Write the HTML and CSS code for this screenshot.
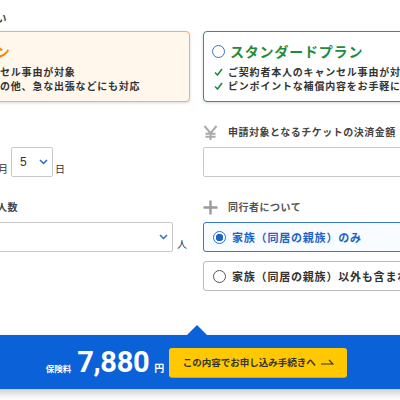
FILE: index.html
```html
<!DOCTYPE html>
<html lang="ja">
<head>
<meta charset="utf-8">
<title>プラン選択</title>
<link rel="stylesheet" href="styles.css">
</head>
<body>
<div class="viewport">
  <div class="page">
    <section class="plans">
      <div class="label">
        <svg class="icon" viewBox="0 0 15 15"><path d="M2 3h11M2 7.5h11M2 12h11" stroke="#999" stroke-width="2" fill="none"/></svg>
        <span>プランを選んでください</span>
      </div>
      <div class="cards">
        <div class="card card--light">
          <div class="card-title"><span class="radio radio--orange"></span>プレミアムプラン</div>
          <ul class="checks checks--orange">
            <li><svg class="check" viewBox="0 0 9 8"><path d="M1 4.5L3.5 7L8 1" fill="none" stroke-width="1.6"/></svg>ご契約者本人のキャンセル事由が対象</li>
            <li><svg class="check" viewBox="0 0 9 8"><path d="M1 4.5L3.5 7L8 1" fill="none" stroke-width="1.6"/></svg>ご家族の病気・ケガその他、急な出張などにも対応</li>
          </ul>
        </div>
        <div class="card card--std">
          <div class="card-title"><span class="radio radio--blue"></span>スタンダードプラン</div>
          <ul class="checks checks--green">
            <li><svg class="check" viewBox="0 0 9 8"><path d="M1 4.5L3.5 7L8 1" fill="none" stroke-width="1.6"/></svg>ご契約者本人のキャンセル事由が対象</li>
            <li><svg class="check" viewBox="0 0 9 8"><path d="M1 4.5L3.5 7L8 1" fill="none" stroke-width="1.6"/></svg>ピンポイントな補償内容をお手軽に</li>
          </ul>
        </div>
      </div>
    </section>

    <div class="form-grid">
      <div class="field">
        <div class="label">
          <svg class="icon" viewBox="0 0 15 15"><rect x="1.5" y="3" width="12" height="10.5" stroke="#999" stroke-width="2" fill="none"/><path d="M1.5 6.5h12" stroke="#999" stroke-width="2"/></svg>
          <span>ご出発日</span>
        </div>
        <div class="date-row">
          <div class="select select--year"><span>2024</span><svg class="chev" viewBox="0 0 9 6"><path d="M1 1L4.5 4.5L8 1"/></svg></div>
          <span class="unit">年</span>
          <div class="select select--small"><span>5</span><svg class="chev" viewBox="0 0 9 6"><path d="M1 1L4.5 4.5L8 1"/></svg></div>
          <span class="unit">月</span>
          <div class="select select--small"><span>5</span><svg class="chev" viewBox="0 0 9 6"><path d="M1 1L4.5 4.5L8 1"/></svg></div>
          <span class="unit">日</span>
        </div>
      </div>

      <div class="field">
        <div class="label">
          <svg class="icon" viewBox="0 0 15 15"><path d="M1.5 1L7.5 8.2L13.5 1M7.5 8V15M2.5 8.7H12.5M2.5 11.8H12.5" stroke="#aaa" stroke-width="2" fill="none"/></svg>
          <span>申請対象となるチケットの決済金額</span>
        </div>
        <div class="input"></div>
      </div>

      <div class="field">
        <div class="label">
          <svg class="icon" viewBox="0 0 15 15"><circle cx="7.5" cy="4.5" r="3" stroke="#999" stroke-width="2" fill="none"/><path d="M1.5 14.5c0-4 2.7-6 6-6s6 2 6 6" stroke="#999" stroke-width="2" fill="none"/></svg>
          <span>ご契約者を含むご参加人数</span>
        </div>
        <div class="people-row">
          <div class="select select--wide"><span></span><svg class="chev" viewBox="0 0 9 6"><path d="M1 1L4.5 4.5L8 1"/></svg></div>
          <span class="unit">人</span>
        </div>
      </div>

      <div class="field">
        <div class="label">
          <svg class="icon" viewBox="0 0 15 15"><path d="M7.5 0.5V14.5M0.5 7.5H14.5" stroke="#9a9a9a" stroke-width="2.4" fill="none"/></svg>
          <span class="label-light">同行者について</span>
        </div>
        <div class="options">
          <div class="option option--on"><span class="radio radio--on"></span>家族（同居の親族）のみ</div>
          <div class="option"><span class="radio radio--off"></span>家族（同居の親族）以外も含まれる</div>
        </div>
      </div>
    </div>

    <footer class="bar">
      <div class="price">
        <span class="price-label">保険料</span>
        <span class="price-num">7,880</span>
        <span class="price-yen">円</span>
      </div>
      <div class="cta">
        <span>この内容でお申し込み手続きへ</span>
        <svg class="arrow" viewBox="0 0 13 6"><path d="M0 5H12L8 1" fill="none" stroke="#333" stroke-width="1.2"/></svg>
      </div>
    </footer>
  </div>
</div>
</body>
</html>
```

FILE: styles.css
```css
* { box-sizing: border-box; }

html, body {
  margin: 0;
  padding: 0;
  background: #fff;
}

body {
  font-family: "Noto Sans CJK JP", "Noto Sans", sans-serif;
  color: #333;
}

.viewport {
  width: 400px;
  height: 400px;
  overflow: hidden;
}

.page {
  width: 659px;
  margin-left: -133px;
  padding-top: 10px;
}

/* labels */
.label {
  display: flex;
  align-items: center;
  gap: 10px;
  height: 16px;
  font-size: 10px;
  line-height: 16px;
  letter-spacing: 0.5px;
  font-weight: 700;
  color: #444;
}

.label .icon {
  width: 15px;
  height: 15px;
  flex: none;
}

.label-light {
  color: #555;
}

.plans .label {
  margin-bottom: 5px;
}

/* plan cards */
.cards {
  display: grid;
  grid-template-columns: 323px 323px;
  column-gap: 13px;
}

.card {
  border: 1px solid;
  border-radius: 4px;
  padding: 9px 8px 8px;
  box-shadow: 0 1px 3px rgba(0, 0, 0, 0.16);
}

.card--light {
  background: #fff6ec;
  border-color: #f3b25c;
  color: #333;
}

.card--std {
  background: #fff;
  border-color: #4d8b62;
}

.card-title {
  display: flex;
  align-items: center;
  gap: 5px;
  font-size: 14px;
  line-height: 20px;
  font-weight: 700;
  letter-spacing: 0.8px;
}

.card--light .card-title { color: #f08c00; }
.card--std .card-title { color: #1f8b3b; }

.checks {
  list-style: none;
  margin: 4px 0 0;
  padding: 0 0 0 2px;
  font-size: 10px;
  line-height: 14px;
  letter-spacing: 0.8px;
  font-weight: 700;
  color: #333;
  white-space: nowrap;
}

.checks li {
  display: flex;
  align-items: center;
  gap: 5px;
}

.check {
  width: 9px;
  height: 8px;
  flex: none;
}

.checks--green .check path { stroke: #1f8b3b; }
.checks--orange .check path { stroke: #f08c00; }

/* radios */
.radio {
  width: 13px;
  height: 13px;
  border-radius: 50%;
  flex: none;
  background: #fff;
}

.radio--blue {
  border: 1.5px solid #3a72c9;
}

.radio--orange {
  border: 1.5px solid #f08c00;
  background: radial-gradient(circle, #f08c00 0 3.3px, #fff 3.8px);
}

.radio--on {
  border: 1.5px solid #2b6ccc;
  background: radial-gradient(circle, #1f63c9 0 3.5px, #fff 4px);
}

.radio--off {
  border: 1.2px solid #555;
}

/* form grid */
.form-grid {
  display: grid;
  grid-template-columns: 323px 323px;
  column-gap: 13px;
  row-gap: 22px;
  margin-top: 22px;
}

.field .label {
  margin-bottom: 7px;
}

.date-row,
.people-row {
  display: flex;
  align-items: flex-end;
}

.select {
  height: 30px;
  border: 1px solid #c9c9c9;
  border-radius: 2px;
  background: #fff;
  display: flex;
  align-items: center;
  justify-content: space-between;
  padding: 0 4px 0 8px;
  font-family: "Liberation Sans", "Noto Sans", sans-serif;
  font-size: 12px;
  color: #333;
}

.select--year { width: 72px; }
.select--small { width: 42px; }
.select--wide { width: 311px; }

.chev {
  width: 9px;
  height: 6px;
  flex: none;
}

.chev path {
  fill: none;
  stroke: #2a6cd0;
  stroke-width: 1.5;
}

.unit {
  font-size: 10px;
  line-height: 12px;
  color: #333;
  margin: 0 3px 2px 2px;
}

.people-row .unit {
  margin-left: 4px;
}

.input {
  height: 30px;
  border: 1px solid #c9c9c9;
  border-radius: 2px;
  background: #fff;
}

.options {
  display: flex;
  flex-direction: column;
  gap: 9px;
}

.option {
  height: 30px;
  border: 1px solid #b9b9b9;
  border-radius: 3px;
  display: flex;
  align-items: center;
  gap: 6px;
  padding-left: 9px;
  font-size: 11px;
  font-weight: 700;
  letter-spacing: 0.8px;
  color: #333;
  white-space: nowrap;
}

.option--on {
  border-color: #3677cc;
  background: #f8fbff;
  color: #1c63c8;
}

/* bottom bar */
.bar {
  position: relative;
  margin-top: 44px;
  height: 54px;
  background: #0b61d7;
  display: flex;
  align-items: center;
  justify-content: center;
  box-shadow: 0 4px 8px rgba(0, 0, 0, 0.22);
}

.bar::before {
  content: "";
  position: absolute;
  left: 50%;
  top: -10px;
  transform: translateX(-50%);
  border-left: 10px solid transparent;
  border-right: 10px solid transparent;
  border-bottom: 10px solid #0b61d7;
}

.price {
  display: flex;
  align-items: baseline;
  color: #fff;
  font-weight: 700;
}

.price-label {
  font-size: 8.5px;
  margin-right: 6px;
}

.price-num {
  font-family: Roboto, "Liberation Sans", sans-serif;
  font-size: 29px;
  line-height: 1;
  letter-spacing: -0.3px;
}

.price-yen {
  font-size: 10px;
  margin-left: 5px;
}

.cta {
  margin-left: 5px;
  width: 178px;
  height: 29px;
  background: #ffc800;
  border-radius: 3px;
  box-shadow: 0 1px 0 #d9a200;
  display: flex;
  align-items: center;
  justify-content: center;
  gap: 5px;
  font-size: 9.5px;
  font-weight: 700;
  color: #333;
  white-space: nowrap;
}

.arrow {
  width: 13px;
  height: 6px;
  flex: none;
}
```
